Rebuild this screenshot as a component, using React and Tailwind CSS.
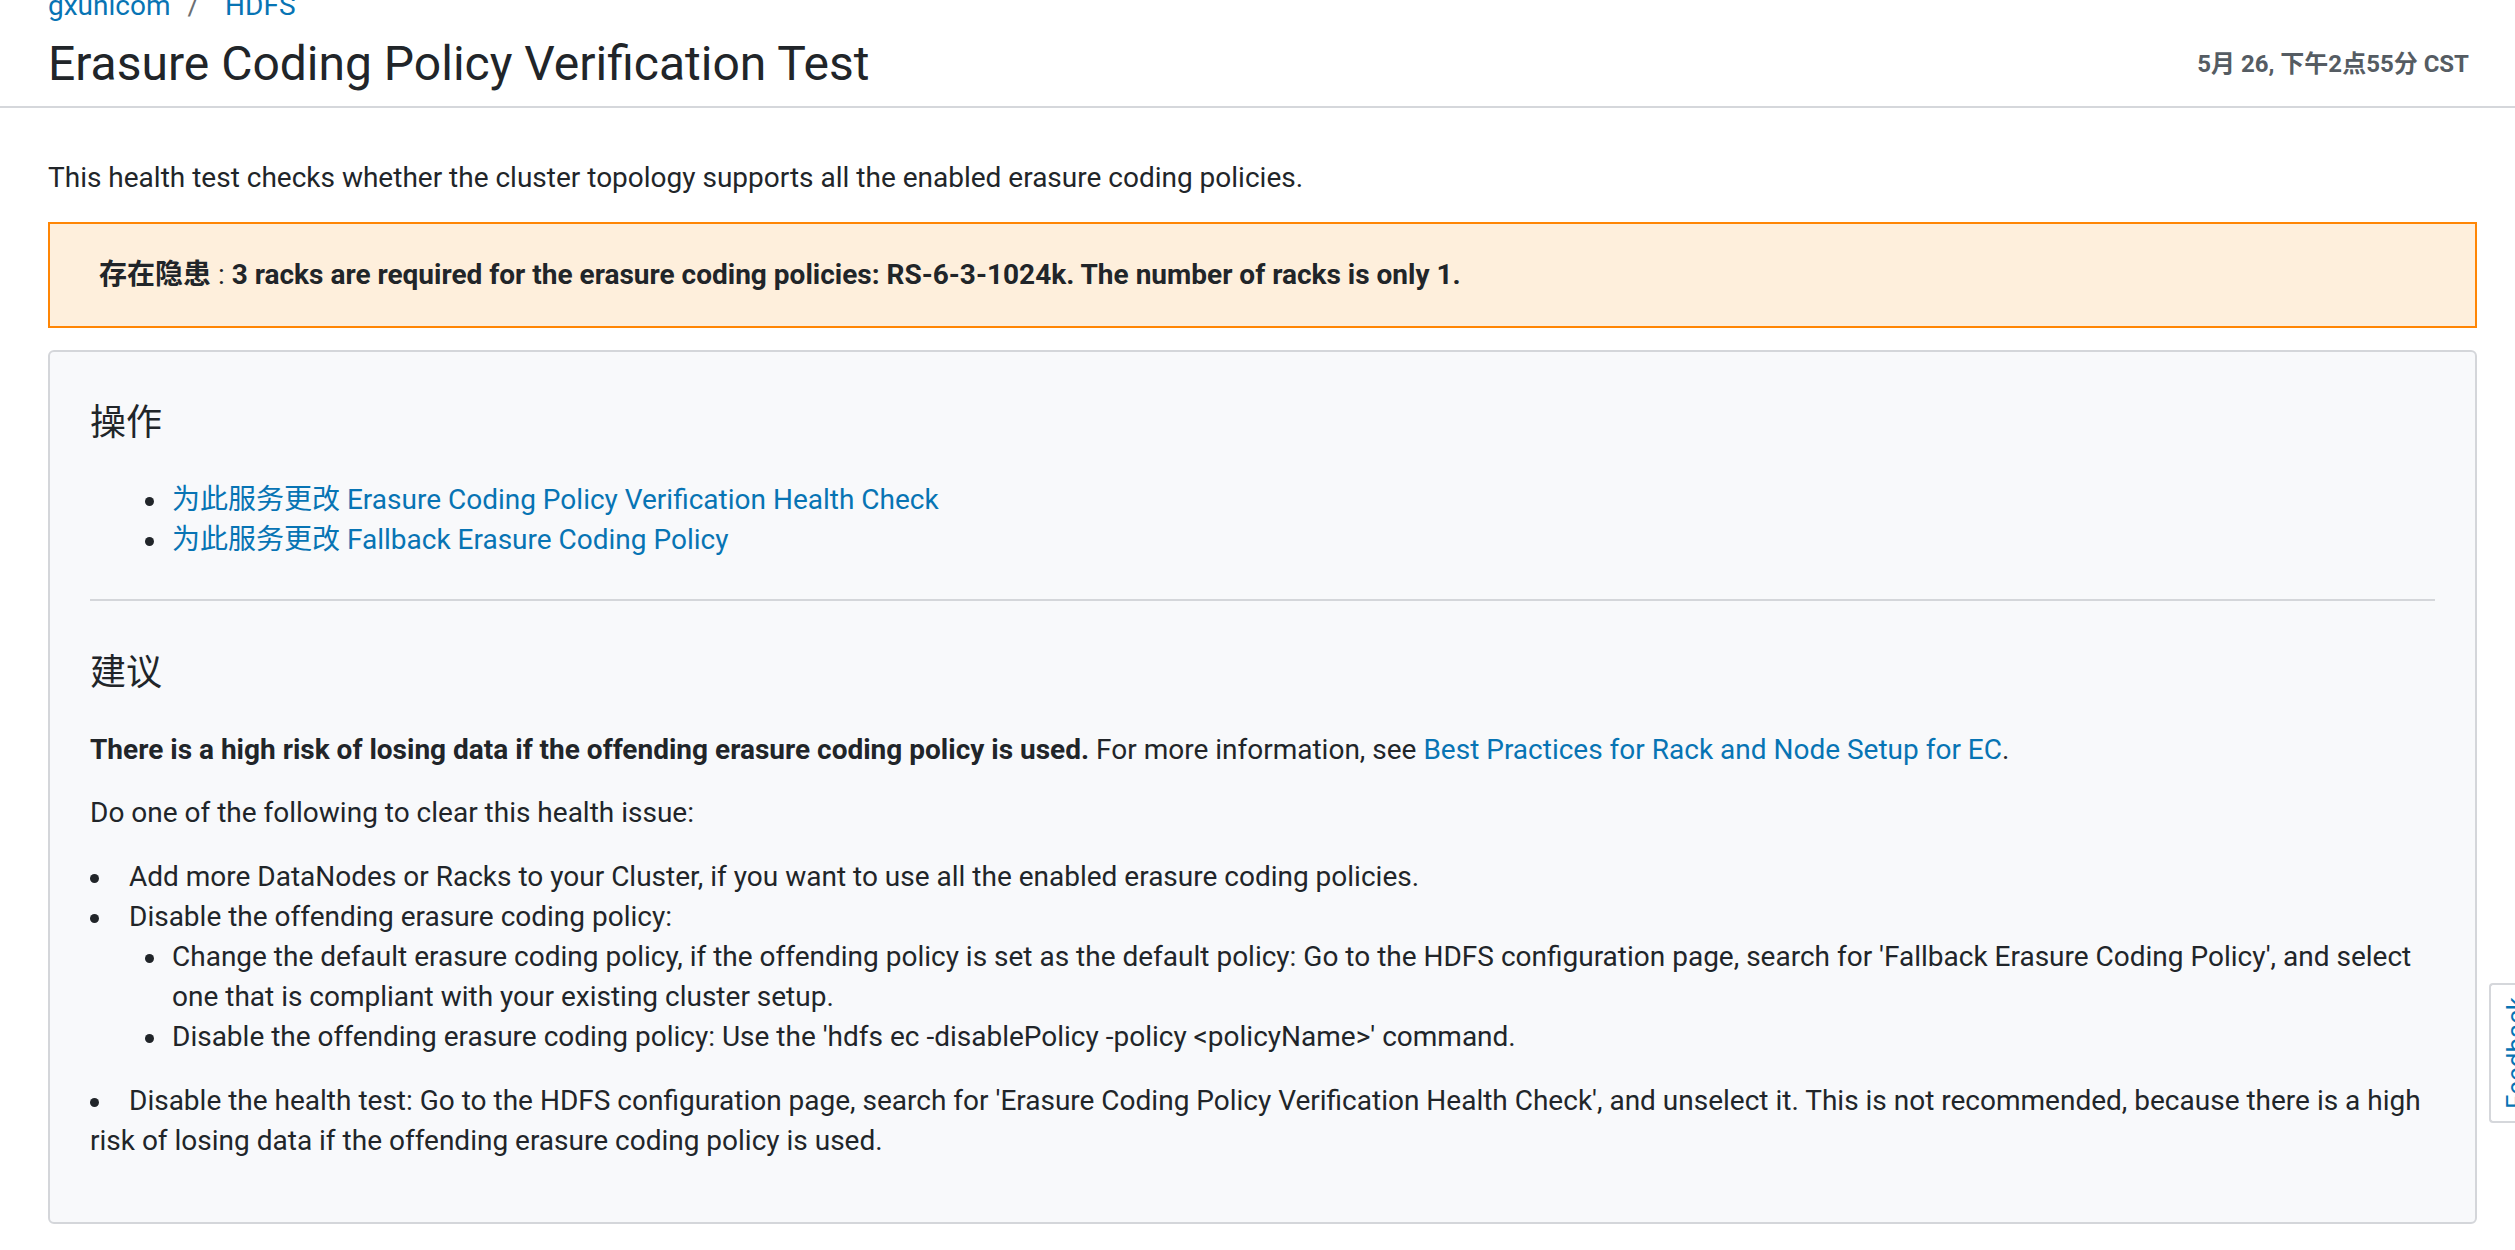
import React from "react";

const FONT = { fontFamily: "Roboto, 'Noto Sans CJK SC', sans-serif" };

function Dot() {
  return <span className="mt-[17px] h-[9px] w-[9px] shrink-0 rounded-full bg-[#212529]" />;
}

function Item({ children }) {
  return (
    <li className="flex pl-[55px]">
      <Dot />
      <span className="ml-[18px]">{children}</span>
    </li>
  );
}

function TopItem({ children, extra, className = "" }) {
  return (
    <div className={className}>
      <span className="inline-flex w-[39px] align-top">
        <span className="mt-[17px] h-[9px] w-[9px] rounded-full bg-[#212529]" />
      </span>
      {children}
      {extra}
    </div>
  );
}

export default function App() {
  return (
    <div className="min-h-[1250px] overflow-hidden bg-white text-[#212529]" style={FONT}>
      <header className="border-b-2 border-[#d5d7db] pl-[48px] pr-[46px] pb-[13px]">
        <div className="mt-[-14px] text-[28px] leading-[39px]">
          <a className="text-[#0774b4]">gxunicom</a>
          <span className="px-[17px] text-[#6c6f73]">/</span>
          <a className="pl-[9px] text-[#0774b4]">HDFS</a>
        </div>
        <div className="mt-[9px] flex items-center justify-between">
          <h1 className="text-[48px] font-normal leading-[59px]">Erasure Coding Policy Verification Test</h1>
          <div className="text-[24px] font-bold text-[#555c63]">5月 26, 下午2点55分 CST</div>
        </div>
      </header>

      <main className="pl-[48px] pr-[38px] text-[28px] leading-[40px]">
        <p className="mt-[50px]">
          This health test checks whether the cluster topology supports all the enabled erasure coding policies.
        </p>

        <div className="mt-[24px] border-2 border-[#ff8605] bg-[#feefdc] py-[31px] pl-[49px]">
          <span className="font-bold">存在隐患</span> :{" "}
          <span className="font-bold">
            3 racks are required for the erasure coding policies: RS-6-3-1024k. The number of racks is only 1.
          </span>
        </div>

        <div className="mt-[22px] rounded-[6px] border-2 border-[#d4d6da] bg-[#f8f9fb] px-[40px] pt-[49px] pb-[61px]">
          <h3 className="text-[36px] font-normal leading-[44px]">操作</h3>
          <ul className="mt-[35px]">
            <Item>
              <a className="text-[#0774b4]">为此服务更改 Erasure Coding Policy Verification Health Check</a>
            </Item>
            <Item>
              <a className="text-[#0774b4]">为此服务更改 Fallback Erasure Coding Policy</a>
            </Item>
          </ul>

          <hr className="mt-[39px] border-0 border-t-2 border-[#d4d6da]" />

          <h3 className="mt-[50px] text-[36px] font-normal leading-[44px]">建议</h3>
          <p className="mt-[35px]">
            <b className="font-bold">There is a high risk of losing data if the offending erasure coding policy is used.</b> For more
            information, see <a className="text-[#0774b4]">Best Practices for Rack and Node Setup for EC</a>.
          </p>
          <p className="mt-[23px]">Do one of the following to clear this health issue:</p>

          <div className="mt-[24px]">
            <TopItem>Add more DataNodes or Racks to your Cluster, if you want to use all the enabled erasure coding policies.</TopItem>
            <TopItem
              extra={
                <ul>
                  <Item>
                    Change the default erasure coding policy, if the offending policy is set as the default policy: Go to the HDFS
                    configuration page, search for 'Fallback Erasure Coding Policy', and select one that is compliant with your
                    existing cluster setup.
                  </Item>
                  <Item>
                    Disable the offending erasure coding policy: Use the 'hdfs ec -disablePolicy -policy &lt;policyName&gt;' command.
                  </Item>
                </ul>
              }
            >
              Disable the offending erasure coding policy:
            </TopItem>
            <TopItem className="mt-[24px]">
              Disable the health test: Go to the HDFS configuration page, search for 'Erasure Coding Policy Verification Health
              Check', and unselect it. This is not recommended, because there is a high risk of losing data if the offending
              erasure coding policy is used.
            </TopItem>
          </div>
        </div>
      </main>

      <div className="fixed left-[2489px] top-[983px] flex h-[140px] w-[60px] items-center rounded-l-[4px] border-2 border-r-0 border-[#d5d7db] bg-white pl-[12px]">
        <span className="rotate-180 text-[26px] leading-[26px] text-[#0774b4] [writing-mode:vertical-rl]">Feedback</span>
      </div>
    </div>
  );
}
